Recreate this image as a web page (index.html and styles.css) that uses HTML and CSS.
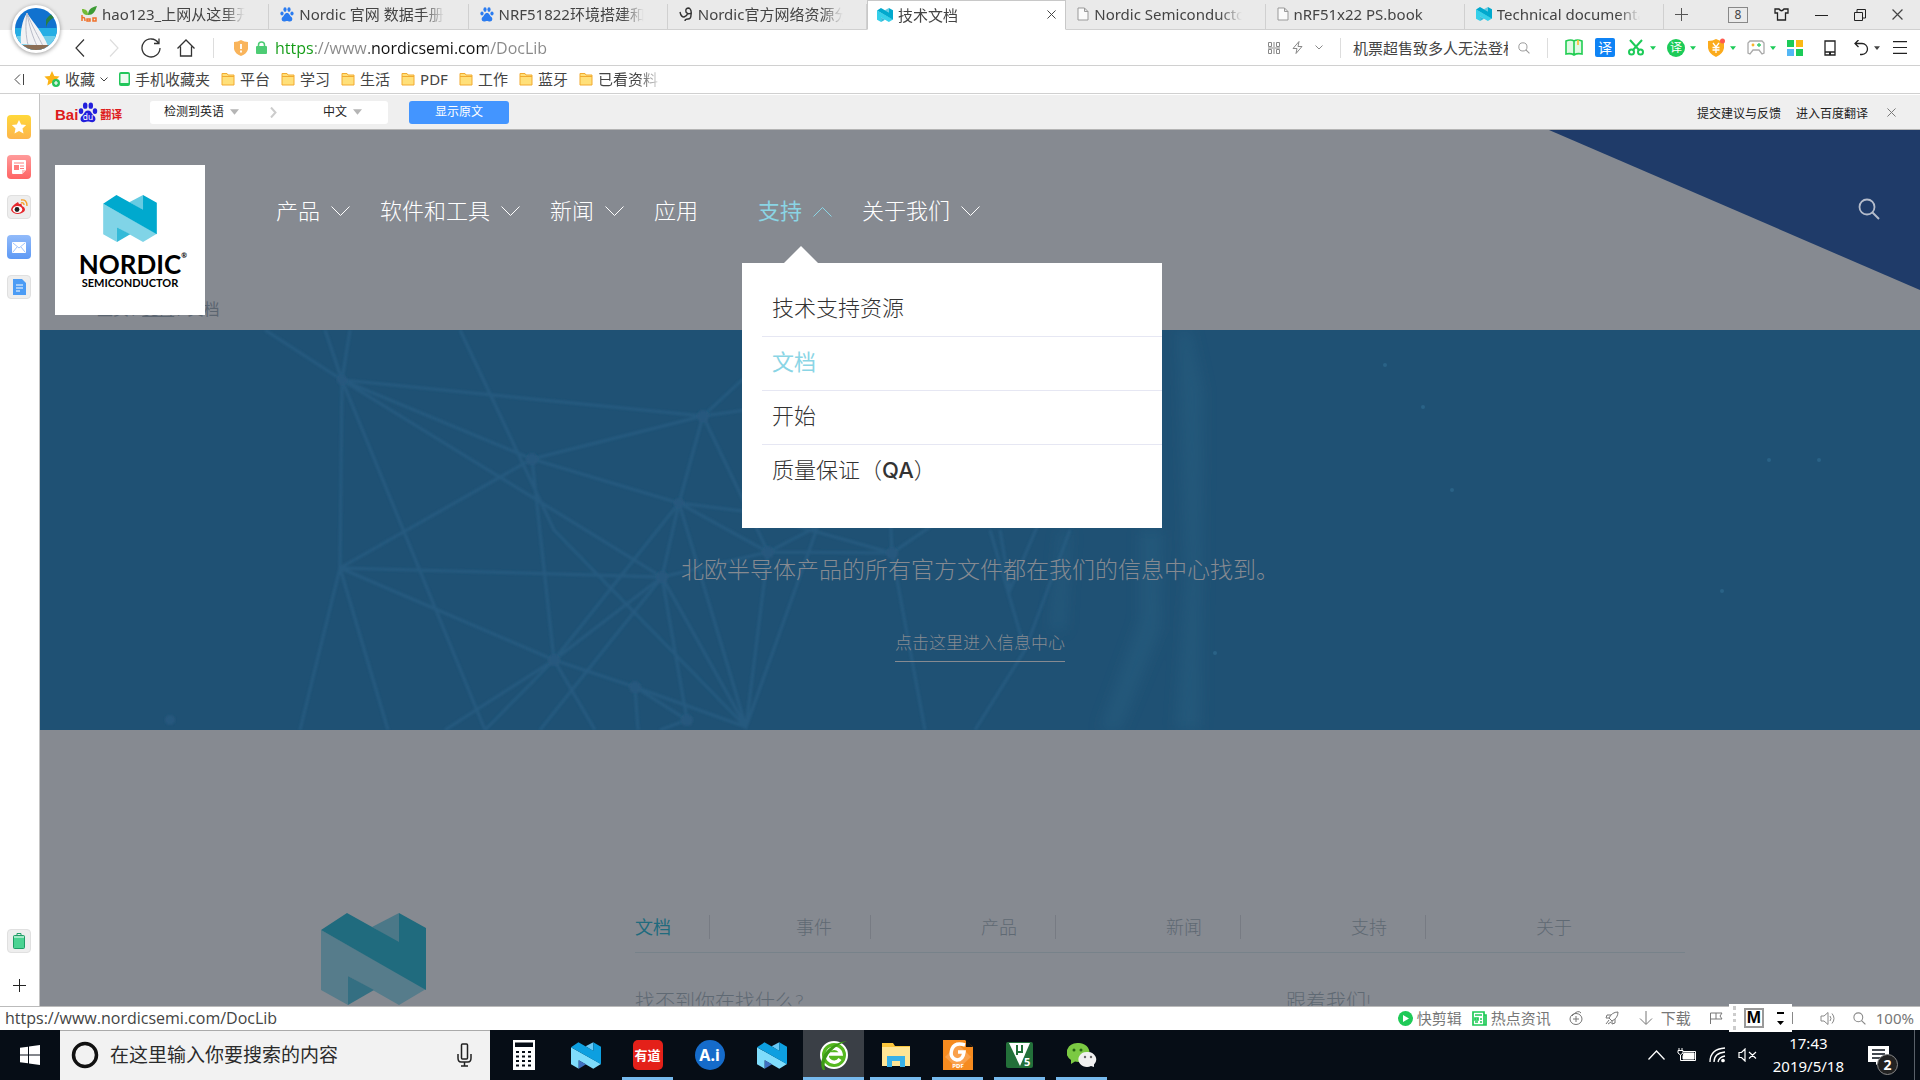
FILE: index.html
```
<!DOCTYPE html>
<html lang="zh-CN">
<head>
  <meta charset="UTF-8">
  <meta name="viewport" content="width=device-width, initial-scale=1.0">
  <title>技术文档</title>
  <link rel="stylesheet" href="styles.css">
</head>
<body>

<svg class="defs" width="0" height="0" aria-hidden="true">
  <symbol id="nordic" viewBox="0 0 105 92">
    <path class="n-light" d="M0 17 105 76 78 92 27 63V92L0 77Z"/>
    <path class="n-fold" d="M27 63 53 77 27 92Z"/>
    <path class="n-mid" d="M51 14 78 0V30Z"/>
    <path class="n-dark" d="M0 17 26 0 78 29V0L105 15V77Z"/>
  </symbol>
  <symbol id="paw" viewBox="0 0 14 15">
    <ellipse cx="2" cy="6.5" rx="1.6" ry="2.1"/><ellipse cx="5" cy="2.6" rx="1.6" ry="2.3"/><ellipse cx="9" cy="2.6" rx="1.6" ry="2.3"/><ellipse cx="12" cy="6.5" rx="1.6" ry="2.1"/>
    <path d="M7 6C4.500 6 4.500 8.500 2.600 10 1 11.500 1.500 14.500 4 14.500 5.500 14.500 6 14 7 14s1.500.5 3 .5c2.500 0 3-3 1.400-4.500C9.500 8.500 9.500 6 7 6Z"/>
  </symbol>
  <symbol id="page" viewBox="0 0 12 14"><path d="M1 1H7.500L11 4.500V13H1ZM7.500 1V4.500H11" fill="#fafafa" stroke="#999"/></symbol>
  <symbol id="folder" viewBox="0 0 14 14"><path d="M1 1.500H6L7 3H13V13H1Z" fill="#ffe07a" stroke="#f2ab31"/><path d="M1 4.500H13" stroke="#f2ab31"/></symbol>
  <symbol id="down" viewBox="0 0 19 11"><path d="M.5.5 9.500 9.500 18.500.5" fill="none" stroke="currentColor"/></symbol>
  <symbol id="small-down" viewBox="0 0 8 5"><path d="M.5.5 4 4 7.500.5" fill="none" stroke="currentColor"/></symbol>
  <symbol id="tri" viewBox="0 0 8 5"><path d="M0 0H8L4 5Z" fill="currentColor"/></symbol>
  <symbol id="mag" viewBox="0 0 22 22"><circle cx="9" cy="9" r="7.500" fill="none" stroke="currentColor" stroke-width="1.800"/><path d="M14.500 14.500 21 21" stroke="currentColor" stroke-width="2"/></symbol>
  <symbol id="cross" viewBox="0 0 10 10"><path d="M.5.5 9.500 9.500M9.500.5.5 9.500" stroke="currentColor" stroke-width="1.100"/></symbol>
</svg>

<header class="browser">
  <a class="avatar" href="#" aria-label="用户">
    <svg viewBox="0 0 42 42" width="42" height="42">
      <defs><clipPath id="round"><circle cx="21" cy="21" r="21"/></clipPath></defs>
      <g clip-path="url(#round)">
        <rect width="42" height="42" fill="#1172cf"/>
        <path d="M0 20H42V30H0Z" fill="#24aee4"/><path d="M0 28H42V42H0Z" fill="#6fcde9"/>
        <path d="M31 20C32 14 36 10 42 9L42 5C37 5 33 8 31 12Z" fill="#2a7f43"/>
        <path d="M6 36C5 24 7 12 12 5 18 14 28 25 33 38Z" fill="#f2f2f4"/>
        <path d="M12 5C14 18 18 29 22 38M12 5C10 18 11 28 13 37M12 5C17 18 24 30 28 38" stroke="#b9bcc8" fill="none"/>
        <path d="M5 37H34L30 42H9Z" fill="#8b6e55"/>
      </g>
    </svg>
  </a>

  <div class="tab-bar">
    <nav class="tabs">
      <a class="tab" href="#"><svg width="16" height="16" viewBox="0 0 16 16"><path d="M1 3C5 3 7 5 7 9 3 9 1 7 1 3Z" fill="#75bb35"/><path d="M16 0C10 1 7 4 7 9 12 9 14 6 16 0Z" fill="#3d9c35"/><path d="M1 9V15M1 12Q4 10 4 15M6 13H9V15H6ZM12 12H15V15H12Z" fill="none" stroke="#f0712b" stroke-width="1.500"/></svg><span>hao123_上网从这里开始</span></a>
      <a class="tab" href="#"><svg class="paw" width="14" height="15"><use href="#paw"/></svg><span>Nordic 官网 数据手册</span></a>
      <a class="tab" href="#"><svg class="paw" width="14" height="15"><use href="#paw"/></svg><span>NRF51822环境搭建和</span></a>
      <a class="tab" href="#"><svg width="14" height="14" viewBox="0 0 14 14" fill="none" stroke="#333" stroke-width="1.400"><path d="M1 5Q2 10 5 10 8 9 9 6M12 6Q9 8 7 5 6 1 10 1 13 3 12 8 12 12 9 12 6 12 6 14"/></svg><span>Nordic官方网络资源分</span></a>
      <a class="tab active" href="#"><svg class="brand tiny" width="16" height="14"><use href="#nordic"/></svg><span>技术文档</span><button class="icon" aria-label="关闭标签"><svg width="9" height="9"><use href="#cross"/></svg></button></a>
      <a class="tab" href="#"><svg width="12" height="14"><use href="#page"/></svg><span>Nordic Semiconductor</span></a>
      <a class="tab" href="#"><svg width="12" height="14"><use href="#page"/></svg><span>nRF51x22 PS.book</span></a>
      <a class="tab" href="#"><svg class="brand tiny" width="16" height="14"><use href="#nordic"/></svg><span>Technical documentation</span></a>
    </nav>
    <div class="window-buttons">
      <button class="icon" aria-label="新标签"><svg width="13" height="13" viewBox="0 0 13 13"><path d="M6.500 0V13M0 6.500H13" stroke="#555"/></svg></button>
      <button class="icon count">8</button>
      <button class="icon" aria-label="皮肤"><svg width="15" height="13" viewBox="0 0 15 13" fill="none" stroke="#222" stroke-width="1.300"><path d="M5 1 1 1V5H3.500V12H11.500V5H14V1H10Q7.500 4.500 5 1Z"/></svg></button>
      <button class="icon" aria-label="最小化"><svg width="13" height="13" viewBox="0 0 13 13"><path d="M0 7.500H13" stroke="#222"/></svg></button>
      <button class="icon" aria-label="还原"><svg width="12" height="12" viewBox="0 0 12 12" fill="none" stroke="#222"><path d="M.5 3.500H8.500V11.500H.5ZM3 3V.5H11.500V9H9"/></svg></button>
      <button class="icon" aria-label="关闭"><svg width="11" height="11"><use href="#cross"/></svg></button>
    </div>
  </div>

  <div class="address-bar">
    <div class="nav-buttons">
      <button class="icon" aria-label="后退"><svg width="10" height="18" viewBox="0 0 10 18" fill="none" stroke="#333" stroke-width="1.200"><path d="M9 .5 1 9 9 17.500"/></svg></button>
      <button class="icon" aria-label="前进"><svg width="10" height="18" viewBox="0 0 10 18" fill="none" stroke="#ddd" stroke-width="1.200"><path d="M1 .5 9 9 1 17.500"/></svg></button>
      <button class="icon" aria-label="刷新"><svg width="20" height="20" viewBox="0 0 20 20" fill="none" stroke="#333" stroke-width="1.300"><path d="M17.500 5A9 9 0 1 0 19 10M18 .5V5.500H13"/></svg></button>
      <button class="icon" aria-label="主页"><svg width="18" height="18" viewBox="0 0 18 18" fill="none" stroke="#333" stroke-width="1.300"><path d="M.5 9.500 9 1 17.500 9.500M3.500 7.500V17H14.500V7.500"/></svg></button>
    </div>
    <form class="url">
      <svg width="14" height="16" viewBox="0 0 14 16"><path d="M0 2Q4 2 7 0 10 2 14 2V9Q13 14 7 16 1 14 0 9Z" fill="#f9b45b"/><path d="M7 4V9M7 10.500V12.500" stroke="#fff" stroke-width="1.800"/></svg>
      <svg width="11" height="13" viewBox="0 0 11 13"><path d="M2.500 6V4A3 3 0 0 1 8.500 4V6" fill="none" stroke="#4dcc74" stroke-width="1.500"/><rect y="5" width="11" height="8" rx="1" fill="#4dcc74"/></svg>
      <input type="text" aria-label="地址" value="https://www.nordicsemi.com/DocLib">
    </form>
    <div class="url-tools">
      <svg width="12" height="12" viewBox="0 0 12 12" fill="none" stroke="#888"><path d="M.5.5H3.500V4.500H.5ZM8.500.5H11.500V4.500H8.500ZM.5 7.500H3.500V11.500H.5ZM8.500 7.500H11.500V11.500H8.500ZM6 0V5M6 7V12M0 6H12"/></svg>
      <svg width="11" height="13" viewBox="0 0 11 13" fill="none" stroke="#888"><path d="M7 .5 1 7.500H5L4 12.500 10 5.500H6Z"/></svg>
      <svg width="8" height="5" color="#888"><use href="#small-down"/></svg>
    </div>
    <form class="search-box">
      <input type="text" aria-label="搜索" value="机票超售致多人无法登机">
      <button class="icon" type="button" aria-label="搜索"><svg width="12" height="12" color="#999"><use href="#mag"/></svg></button>
    </form>
    <div class="extensions">
      <button class="icon" aria-label="阅读"><svg width="18" height="17" viewBox="0 0 18 17" fill="#e0f9e4" stroke="#21cd52" stroke-width="1.600"><path d="M1 2Q6 0 9 2 12 0 17 2V15Q12 14 9 16 6 14 1 15ZM9 2V16"/><path d="M13 1V6" stroke="#fdbd2c"/></svg></button>
      <button class="icon square">译</button>
      <button class="icon" aria-label="截图"><svg width="18" height="17" viewBox="0 0 18 17" fill="none" stroke="#1ccb58" stroke-width="2"><path d="M3 1 12 11M15 1 6 11"/><circle cx="4.500" cy="13" r="2.500"/><circle cx="13.500" cy="13" r="2.500"/></svg><svg class="green" width="6" height="4"><use href="#tri"/></svg></button>
      <button class="icon"><span class="disc">译</span><svg class="green" width="6" height="4"><use href="#tri"/></svg></button>
      <button class="icon" aria-label="网银"><svg width="18" height="19" viewBox="0 0 18 19"><path d="M1 3Q6 3 9 1 12 3 17 3V10Q16 16 9 19 2 16 1 10Z" fill="#fbab1c"/><path d="M6 5 9 9 12 5M5.500 9.500H12.500M5.500 12H12.500M9 9V15" fill="none" stroke="#fff" stroke-width="1.300"/><circle cx="15.500" cy="3" r="2.500" fill="#ff5a4f"/></svg><svg class="green" width="6" height="4"><use href="#tri"/></svg></button>
      <button class="icon" aria-label="游戏"><svg width="18" height="15" viewBox="0 0 18 15" fill="none" stroke="#aaa" stroke-width="1.300"><path d="M3 1H15L17 3V13L15 14 12 10H6L3 14 1 13V3Z"/><circle cx="6" cy="5" r=".8" stroke="#f9b32b"/><path d="M12 3V7M10 5H14" stroke="#37cc6b"/></svg><svg class="green" width="6" height="4"><use href="#tri"/></svg></button>
      <button class="icon" aria-label="应用"><svg width="16" height="16" viewBox="0 0 16 16"><path d="M0 0H7V7H0Z" fill="#1ccb58"/><path d="M9 0H16V7H9Z" fill="#fbb814"/><path d="M0 9H7V16H0Z" fill="#54b7f5"/><path d="M9 9H16V16H9Z" fill="#1ccb58"/></svg></button>
      <button class="icon wide" aria-label="手机"><svg width="12" height="16" viewBox="0 0 12 16" fill="none" stroke="#222" stroke-width="1.300"><path d="M1 1H11V15H1ZM1 12H11M5 13.500H7"/></svg></button>
      <button class="icon" aria-label="撤销"><svg width="15" height="16" viewBox="0 0 15 16" fill="none" stroke="#222" stroke-width="1.300"><path d="M4.500 0 1 3.500 4.500 7M1 3.500H8A5.500 5.500 0 0 1 8 14.500H6"/></svg><svg width="6" height="4"><use href="#tri"/></svg></button>
      <button class="icon more" aria-label="菜单"><svg width="14" height="13" viewBox="0 0 14 13" stroke="#222" stroke-width="1.200"><path d="M0 .6H14M0 6.500H14M0 12.400H14"/></svg></button>
    </div>
  </div>

  <nav class="bookmarks">
    <button class="icon fold" aria-label="折叠"><svg width="10" height="11" viewBox="0 0 10 11" fill="none" stroke="#444"><path d="M6 .5 1 5.500 6 10.500M9.500 0V11"/></svg></button>
    <a class="fav" href="#"><svg width="16" height="16" viewBox="0 0 16 16"><path d="M8 0 10.300 5 15.500 5.600 11.600 9.200 12.600 14.500 8 11.800 3.300 14.500 4.300 9.200.4 5.600 5.700 5Z" fill="#fbb316"/><circle cx="12" cy="12" r="4" fill="#28c45c"/><path d="M12 10V14M10 12H14" stroke="#fff" stroke-width="1.200"/></svg>收藏 <svg width="8" height="5"><use href="#small-down"/></svg></a>
    <a href="#"><svg width="11" height="14" viewBox="0 0 11 14"><rect width="11" height="14" rx="2" fill="#22c65b"/><path d="M1.500 2H9.500V11H1.500Z" fill="#ecfbf0"/></svg>手机收藏夹</a>
    <a href="#"><svg width="14" height="14"><use href="#folder"/></svg>平台</a>
    <a href="#"><svg width="14" height="14"><use href="#folder"/></svg>学习</a>
    <a href="#"><svg width="14" height="14"><use href="#folder"/></svg>生活</a>
    <a href="#"><svg width="14" height="14"><use href="#folder"/></svg>PDF</a>
    <a href="#"><svg width="14" height="14"><use href="#folder"/></svg>工作</a>
    <a href="#"><svg width="14" height="14"><use href="#folder"/></svg>蓝牙</a>
    <a class="faded" href="#"><svg width="14" height="14"><use href="#folder"/></svg>已看资料</a>
  </nav>
</header>

<div class="workspace">
  <aside class="sidebar">
    <button class="icon tile yellow" aria-label="收藏"><svg width="16" height="16" viewBox="0 0 16 16"><path d="M8 1 10.200 5.500 15.200 6.100 11.500 9.600 12.500 14.500 8 12 3.500 14.500 4.500 9.600.8 6.100 5.800 5.500Z" fill="#fff"/></svg></button>
    <button class="icon tile red" aria-label="新闻"><svg width="14" height="14" viewBox="0 0 14 14"><path d="M0 1Q0 0 1 0H13Q14 0 14 1V10L10 14H1Q0 14 0 13Z" fill="#fff"/><path d="M2 3H12M8 6H12M8 8.500H12" stroke="#ff7d7d"/><path d="M2 5H7V10H2Z" fill="#ff7d7d"/><path d="M10 14V10H14" fill="#ffc4c4"/></svg></button>
    <button class="icon tile plain" aria-label="微博"><svg width="18" height="16" viewBox="0 0 18 16"><path d="M8 3Q1 7 1 11 3 15 8 15 14 14 15 11 15 8 12 7 12 4 9 5Z" fill="#e6282d"/><ellipse cx="7.500" cy="10.500" rx="4.800" ry="3.500" fill="#fff"/><circle cx="7" cy="10.500" r="2.400" fill="#222"/><path d="M11 1Q17 0 17 7M11 4Q14 3 14 6" fill="none" stroke="#f6a02e" stroke-width="1.400"/></svg></button>
    <button class="icon tile blue" aria-label="邮箱"><svg width="14" height="11" viewBox="0 0 14 11"><rect width="14" height="11" rx="1" fill="#fff"/><path d="M1 1 7 6 13 1M1 10 5 5M13 10 9 5" fill="none" stroke="#9fc3fb"/></svg></button>
    <button class="icon tile plain" aria-label="文档"><svg width="13" height="16" viewBox="0 0 13 16"><path d="M0 0H9L13 4V16H0Z" fill="#4c9cf5"/><path d="M3 6H10M3 9H10M3 12H7" stroke="#fff"/></svg></button>
    <span class="spacer"></span>
    <button class="icon tile plain" aria-label="清理"><svg width="12" height="16" viewBox="0 0 12 16"><rect x=".5" y="2.500" width="11" height="13" rx="1" fill="#4bd392" stroke="#1f9d66"/><path d="M4 2V.5H8V2" fill="none" stroke="#1f9d66"/><path d="M1 4H11" stroke="#fff"/></svg></button>
    <button class="icon add" aria-label="添加"><svg width="13" height="13" viewBox="0 0 13 13"><path d="M6.500 0V13M0 6.500H13" stroke="#222"/></svg></button>
  </aside>

  <main class="content">
    <div class="translate-bar">
      <a class="baidu" href="#"><b>Bai</b><svg width="20" height="21" viewBox="0 0 14 15"><use href="#paw"/><text x="7" y="13" font-size="6" text-anchor="middle">du</text></svg><span>翻译</span></a>
      <div class="languages">
        <label><select aria-label="源语言"><option>检测到英语</option></select><svg width="9" height="6"><use href="#tri"/></svg></label>
        <svg class="to" width="7" height="11" viewBox="0 0 7 11"><path d="M1 .5 5.500 5.500 1 10.500" fill="none" stroke="#ccc" stroke-width="2"/></svg>
        <label><select aria-label="目标语言"><option>中文</option></select><svg width="9" height="6"><use href="#tri"/></svg></label>
      </div>
      <button class="original">显示原文</button>
      <div class="translate-links">
        <a href="#">提交建议与反馈</a>
        <a href="#">进入百度翻译</a>
        <button class="icon" aria-label="关闭翻译"><svg width="9" height="9"><use href="#cross"/></svg></button>
      </div>
    </div>

    <div class="site">
      <header class="site-header">
        <div class="corner"></div>
        <div class="crumbs"><span>主页</span>/<a href="#">支持</a>/<span>文档</span></div>
        <a class="logo" href="#">
          <svg class="brand" width="54" height="47"><use href="#nordic"/></svg>
          <span class="logo-name">NORDIC<sup>®</sup></span>
          <span class="logo-sub">SEMICONDUCTOR</span>
        </a>
        <nav class="menu">
          <a href="#">产品<svg width="19" height="11"><use href="#down"/></svg></a>
          <a href="#">软件和工具<svg width="19" height="11"><use href="#down"/></svg></a>
          <a href="#">新闻<svg width="19" height="11"><use href="#down"/></svg></a>
          <a href="#">应用<svg width="19" height="11"></svg></a>
          <div class="menu-item">
            <a class="current" href="#">支持<svg width="19" height="11" viewBox="0 0 19 11"><path d="M.5 10.500 9.500 1.500 18.500 10.500" fill="none" stroke="currentColor"/></svg></a>
            <div class="submenu">
              <a href="#">技术支持资源</a>
              <a class="current" href="#">文档</a>
              <a href="#">开始</a>
              <a href="#">质量保证（<b>QA</b>）</a>
            </div>
          </div>
          <a href="#">关于我们<svg width="19" height="11"><use href="#down"/></svg></a>
        </nav>
        <button class="icon site-search" aria-label="搜索"><svg width="22" height="22"><use href="#mag"/></svg></button>
      </header>

      <section class="hero">
        <svg class="network" viewBox="0 0 1880 400" preserveAspectRatio="xMinYMin slice" aria-hidden="true">
          <defs>
            <filter id="soft"><feGaussianBlur stdDeviation="1"/></filter>
            <filter id="haze" x="-100%" width="300%"><feGaussianBlur stdDeviation="7"/></filter>
          </defs>
          <g fill="none" stroke="#2a6187" stroke-width="3" opacity=".6" filter="url(#soft)">
            <path d="M225 0 302 50 285 0M310 0 302 50 663 86 492 129 302 50 300 238 492 129M302 50 622 247 300 238 514 330 622 247 639 173 492 129 514 330"/>
            <path d="M663 86 702 50 800 0M663 86 639 173 702 181 852 223 728 222 639 173 514 330M663 86 728 222 622 247M663 86 850 60M728 222 790 190M852 223 850 180M852 223 900 190"/>
            <path d="M420 0 514 200 706 397M302 50 445 400M300 238 260 400M300 238 348 400M514 330 405 400M514 330 445 400M514 330 555 400M514 330 595 357 706 397M622 247 647 390M622 247 706 397 780 190M622 247 500 400M639 173 706 397M595 357 598 400M595 357 647 390 620 400M728 222 706 397M852 223 885 400M950 200 985 320 935 400M960 200 970 260 1000 190M1030 200 985 320"/>
          </g>
          <g fill="#27597e" filter="url(#soft)"><circle cx="302" cy="50" r="5"/><circle cx="663" cy="86" r="6"/><circle cx="492" cy="129" r="6"/><circle cx="639" cy="173" r="5"/><circle cx="622" cy="247" r="6"/><circle cx="514" cy="330" r="6"/><circle cx="728" cy="222" r="6"/><circle cx="852" cy="223" r="6"/><circle cx="595" cy="357" r="6"/><circle cx="647" cy="390" r="6"/><circle cx="130" cy="390" r="5"/></g>
          <g fill="#2b6283" filter="url(#haze)" opacity=".45"><path d="M1138 0H1150L1163 60 1160 400H1136L1146 250Z"/><path d="M1100 200H1122L1120 300 1080 400H1060L1100 290Z"/><path d="M1020 200H1030L1025 300H1010Z"/></g>
          <g fill="#2a6286"><circle cx="1345" cy="35" r="2"/><circle cx="1383" cy="77" r="2"/><circle cx="1412" cy="160" r="2"/><circle cx="1729" cy="130" r="2"/><circle cx="1779" cy="130" r="2"/><circle cx="1682" cy="261" r="2"/><circle cx="1175" cy="323" r="2"/></g>
        </svg>
        <p>北欧半导体产品的所有官方文件都在我们的信息中心找到。</p>
        <a href="#">点击这里进入信息中心</a>
      </section>

      <footer class="site-footer">
        <svg class="brand dim" width="105" height="92"><use href="#nordic"/></svg>
        <div class="footer-body">
          <nav class="footer-tabs">
            <a class="current" href="#">文档</a>
            <a href="#">事件</a>
            <a href="#">产品</a>
            <a href="#">新闻</a>
            <a href="#">支持</a>
            <a href="#">关于</a>
          </nav>
          <div class="footer-titles"><span>找不到你在找什么?</span><span>跟着我们!</span></div>
        </div>
      </footer>
    </div>
  </main>
</div>

<div class="status-bar">
  <span class="status-url">https://www.nordicsemi.com/DocLib</span>
  <div class="status-tools">
    <a href="#"><svg width="15" height="15" viewBox="0 0 15 15"><circle cx="7.500" cy="7.500" r="7.500" fill="#1fca57"/><path d="M5 4 11 7.500 5 11Z" fill="#fff"/></svg>快剪辑</a>
    <a href="#"><svg width="15" height="15" viewBox="0 0 15 15" fill="none" stroke="#1fca57" stroke-width="1.700"><path d="M1 1H12V14H1ZM12 4H14V14H10M3 4H10M3 11H6M8 8H10M8 11H10"/><path d="M3 7H6V9H3Z"/></svg>热点资讯</a>
    <svg width="14" height="14" viewBox="0 0 14 14" fill="none" stroke="#777"><ellipse cx="7" cy="8" rx="6" ry="5.500"/><path d="M3 5Q9-2 12 2M7 5V11M4 8H10"/></svg>
    <svg class="rocket" width="14" height="14" viewBox="0 0 14 14" fill="none" stroke="#777"><path d="M13 1Q7 1 4 7L7 10Q13 7 13 1ZM6 4 2 4 1 7 4 7M10 8V12L7 13V10M4 9 1 13M6 11 3 13"/></svg>
    <a href="#"><svg width="14" height="14" viewBox="0 0 14 14" fill="none" stroke="#777"><path d="M7 0V13M1 7.500 7 13.500 13 7.500"/></svg><span class="dl">下载</span></a>
    <svg width="14" height="12" viewBox="0 0 14 12" fill="none" stroke="#777"><path d="M1.500 12V1H13L11 4 13 7H1.500M7 1V7"/></svg>
    <div class="ime-space"><div class="ime"><i></i><b>M</b><svg width="7" height="13" viewBox="0 0 7 13"><path d="M0 0H7V2H0ZM0 9H7L3.500 13Z"/></svg></div><svg width="2" height="12" viewBox="0 0 2 12"><path d="M0 0H1V12H0Z" fill="#888"/></svg></div>
    <svg width="15" height="13" viewBox="0 0 15 13" fill="none" stroke="#888"><path d="M1 4H4L8 .5V12.500L4 9H1ZM10 4Q12 6.500 10 9M12 1.500Q16 6.500 12 11.500"/></svg>
    <svg width="13" height="13" color="#888"><use href="#mag"/></svg>
    <span>100%</span>
  </div>
</div>

<footer class="taskbar">
  <button class="icon start" aria-label="开始"><svg width="20" height="20" viewBox="0 0 20 20" fill="#fff"><path d="M0 2.800 8 1.700V9.500H0ZM9 1.500 20 0V9.500H9ZM0 10.500H8V18.300L0 17.200ZM9 10.500H20V20L9 18.500Z"/></svg></button>
  <label class="cortana">
    <svg width="28" height="28" viewBox="0 0 28 28"><circle cx="14" cy="14" r="11.500" fill="none" stroke="#111" stroke-width="3.500"/></svg>
    <input type="text" placeholder="在这里输入你要搜索的内容">
    <svg width="15" height="24" viewBox="0 0 15 24" fill="none" stroke="#222" stroke-width="1.500"><rect x="4.500" y="1" width="6" height="15" rx="1"/><path d="M1 11V15Q1 19 4 19H11Q14 19 14 15V11M7.500 19V23M4 23H11"/></svg>
  </label>
  <nav class="apps">
    <button class="icon app" aria-label="计算器"><svg width="22" height="30" viewBox="0 0 22 30"><path d="M0 0H22V30H0Z" fill="#fff"/><path d="M2 2.500H20V7H2ZM3 11H6V13H3ZM9 11H12V13H9ZM15 11H18V13H15ZM3 15.500H6V17.500H3ZM9 15.500H12V17.500H9ZM15 15.500H18V17.500H15ZM3 20H6V22H3ZM9 20H12V22H9ZM15 20H18V22H15ZM3 24.500H6V26.500H3ZM9 24.500H12V26.500H9ZM15 24.500H18V26.500H15Z" fill="#060d16"/></svg></button>
    <button class="icon app" aria-label="Nordic"><svg class="brand vivid" width="30" height="27"><use href="#nordic"/></svg></button>
    <button class="icon app open"><span class="youdao">有道</span></button>
    <button class="icon app"><span class="ai">A.i</span></button>
    <button class="icon app" aria-label="Nordic"><svg class="brand vivid" width="30" height="27"><use href="#nordic"/></svg></button>
    <button class="icon app open focused" aria-label="浏览器"><svg width="30" height="32" viewBox="0 0 30 32"><circle cx="15" cy="16" r="13" fill="#55b81f" stroke="#fff" stroke-width="2"/><path d="M21 20A7 7 0 1 1 22 15H9" fill="none" stroke="#fff" stroke-width="3.500"/><path d="M4 31C-2 22 8 4 28 2 14 7 3 19 6 31Z" fill="#3c9b16"/></svg></button>
    <button class="icon app open" aria-label="资源管理器"><svg width="28" height="24" viewBox="0 0 28 24"><path d="M0 0H11L13 3H28V23H0Z" fill="#fbc63c"/><path d="M0 4H28V23H0Z" fill="#ffe595"/><path d="M5 24V13H23V24H18V18H10V24Z" fill="#38b1e8"/></svg></button>
    <button class="icon app open" aria-label="PDF"><svg width="30" height="30" viewBox="0 0 30 30"><path d="M0 0H22L30 7V30H0Z" fill="#f68b1f"/><path d="M2 17 15 4 28 17 15 29Z" fill="#f9a04b"/><path d="M22 5Q12 2 9 9 6 18 14 20 20 20 21 12H15" fill="none" stroke="#fff" stroke-width="3.500"/><path d="M23 0V7H30Z" fill="#111"/><text x="15" y="28" font-size="6" font-weight="bold" fill="#fff" text-anchor="middle">PDF</text></svg></button>
    <button class="icon app open" aria-label="Keil"><svg width="27" height="26" viewBox="0 0 27 26"><rect width="27" height="26" rx="2" fill="#23703a"/><path d="M3 1H24L14 24Z" fill="#fff"/><path d="M11 3V10H16V3M11 8V13" fill="none" stroke="#23703a" stroke-width="2"/><text x="18" y="24" font-size="11" font-weight="bold" fill="#fff">5</text></svg></button>
    <button class="icon app open" aria-label="微信"><svg width="30" height="25" viewBox="0 0 30 25"><path d="M11 0A11 9.500 0 1 1 8 18.500L4 21V17A11 9.500 0 0 1 11 0Z" fill="#7bc943"/><path d="M21 9A8.500 7.500 0 0 1 27 21.500V24L24 23A8.500 7.500 0 1 1 21 9Z" fill="#f0f0f0"/><g fill="#276514"><circle cx="7" cy="7" r="1.500"/><circle cx="14" cy="7" r="1.500"/></g><g fill="#666"><circle cx="18" cy="14" r="1.200"/><circle cx="24" cy="14" r="1.200"/></g></svg></button>
  </nav>
  <div class="tray">
    <svg width="17" height="10" viewBox="0 0 17 10" fill="none" stroke="#fff" stroke-width="1.300"><path d="M.5 9.500 8.500 1 16.500 9.500"/></svg>
    <svg width="20" height="14" viewBox="0 0 20 14" fill="none" stroke="#fff"><path d="M6 3.500H18.500V12.500H3.500V7M1 2.500H6V5L3.500 7 1 5ZM2 0V2M5 0V2"/><path d="M7 5H17V11H6V8Z" fill="#fff"/></svg>
    <svg width="17" height="16" viewBox="0 0 17 16" fill="none" stroke="#fff" stroke-width="1.300"><path d="M1 15Q1 2 16 1M5 15Q5 6 16 5M9 15Q10 10 16 9"/><circle cx="14" cy="13.500" r="1.200" fill="#fff"/></svg>
    <svg width="19" height="14" viewBox="0 0 19 14" fill="none" stroke="#fff" stroke-width="1.200"><path d="M1 4.500H3.500L7 1V13L3.500 9.500H1ZM11 4 18 10.500M18 4 11 10.500"/></svg>
    <time>17:43<br>2019/5/18</time>
    <button class="icon notice" aria-label="通知"><svg width="21" height="19" viewBox="0 0 21 19"><path d="M0 0H21V16H12L8 19V16H0Z" fill="#fff"/><path d="M4 4H17M4 8H17M4 12H13" stroke="#060d16" stroke-width="1.300"/></svg><span class="badge">2</span></button>
  </div>
</footer>

</body>
</html>
```
FILE: styles.css
```
* {
  box-sizing: border-box;
}

body {
  margin: 0;
  height: 100vh;
  display: flex;
  flex-direction: column;
  overflow: hidden;
  background: #fff;
  color: #444;
  font-family: "Noto Sans", "Noto Sans CJK SC", sans-serif;
  font-size: 15px;
  line-height: 20px;
}

a {
  color: inherit;
  text-decoration: none;
}

svg {
  flex: none;
  display: block;
}

input,
select,
button {
  font: inherit;
  color: inherit;
}

input {
  border: 0;
  padding: 0;
  min-width: 0;
  background: none;
  outline: none;
}

.defs {
  position: absolute;
}

.icon {
  display: flex;
  align-items: center;
  justify-content: center;
  flex: none;
  padding: 0;
  border: 0;
  background: none;
  cursor: pointer;
}

/* Nordic mark */
.brand {
  --dark: #00a9ce;
  --mid: #66cbe2;
  --fold: #33bad8;
  --light: #80d4e7;
}

.brand.tiny {
  --light: #35d0ea;
}

.brand.vivid {
  --dark: #0d9fe0;
  --mid: #67c8f5;
  --fold: #3f6fc0;
  --light: #7fdcfb;
}

.brand.dim {
  --dark: #206b7e;
  --mid: #4b7888;
  --fold: #346f82;
  --light: #567c8b;
}

.n-dark { fill: var(--dark); }
.n-mid { fill: var(--mid); }
.n-fold { fill: var(--fold); }
.n-light { fill: var(--light); }

/* Browser chrome */
.browser {
  position: relative;
  flex: none;
}

.avatar {
  position: absolute;
  left: 12px;
  top: 5px;
  z-index: 2;
  padding: 3px;
  border-radius: 50%;
  background: #fff;
  box-shadow: 0 1px 4px rgba(0, 0, 0, 0.4);
}

.tab-bar {
  display: flex;
  height: 30px;
  padding-left: 70px;
  background: #eaeaea;
}

.tabs {
  display: flex;
  flex: 1;
  min-width: 0;
}

.tab {
  display: flex;
  align-items: center;
  flex: 1;
  min-width: 0;
  gap: 5px;
  padding: 0 9px 1px 11px;
  border-bottom: 1px solid #d0d0d0;
  background: linear-gradient(#d0d0d0, #d0d0d0) right 4px / 1px 100% no-repeat;
}

.tab span {
  flex: 1;
  min-width: 0;
  margin-right: 15px;
  overflow: hidden;
  white-space: nowrap;
  -webkit-mask-image: linear-gradient(to right, #000 85%, transparent);
  mask-image: linear-gradient(to right, #000 85%, transparent);
}

.tab.active {
  padding-left: 9px;
  background: #fff;
  border: 1px solid #c8c8c8;
  border-bottom-color: #fff;
}

.paw {
  fill: #2b7cf0;
}

.window-buttons {
  display: flex;
  align-items: center;
  gap: 26px;
  width: 256px;
  padding-left: 11px;
  border-bottom: 1px solid #d0d0d0;
}

.count {
  width: 20px;
  height: 16px;
  margin-left: 14px;
  border: 1px solid #888;
  font-size: 12px;
}

.address-bar {
  display: flex;
  align-items: center;
  height: 36px;
  padding-right: 13px;
  border-bottom: 1px solid #d0d0d0;
}

.nav-buttons {
  display: flex;
  align-items: center;
  gap: 24px;
  height: 20px;
  width: 214px;
  padding-left: 75px;
  border-right: 1px solid #ddd;
}

.nav-buttons .icon:nth-child(n+3) {
  margin-left: -2px;
}

.nav-buttons .icon:last-child {
  margin-left: -8px;
}

.url {
  display: flex;
  align-items: center;
  flex: 1;
  gap: 8px;
  padding-left: 20px;
}

/* scheme green, host black, the rest grey */
.url input {
  flex: 1;
  height: 24px;
  font-family: "Open Sans", sans-serif;
  font-size: 16px;
  color: transparent;
  background: linear-gradient(to right, #119b14 0 38px, #888 38px 94px, #111 94px 212px, #888 212px);
  -webkit-background-clip: text;
  background-clip: text;
}

.url-tools {
  display: flex;
  align-items: center;
  gap: 12px;
  height: 20px;
  padding-right: 17px;
  border-right: 1px solid #ddd;
}

.search-box {
  display: flex;
  align-items: center;
  gap: 10px;
  height: 20px;
  padding: 0 17px 0 12px;
  border-right: 1px solid #ddd;
}

.search-box input {
  width: 155px;
}

.extensions {
  display: flex;
  align-items: center;
  gap: 11px;
  padding-left: 17px;
}

.extensions .icon {
  gap: 5px;
}

.extensions .square {
  width: 20px;
  height: 19px;
  margin: 0 1px;
  border-radius: 2px;
  background: #0f83f5;
  color: #fff;
  font-size: 14px;
}

.extensions .wide {
  width: 26px;
  margin-left: 3px;
}

.extensions .more {
  margin-left: 2px;
}

.disc {
  width: 18px;
  height: 18px;
  border-radius: 50%;
  background: #1ccb58;
  color: #fff;
  font-size: 12px;
  line-height: 18px;
}

.green {
  color: #1ccb58;
}

.bookmarks {
  display: flex;
  align-items: center;
  gap: 11px;
  height: 28px;
  padding: 0 0 1px 14px;
  border-bottom: 1px solid #d0d0d0;
}

.bookmarks a {
  display: flex;
  align-items: center;
  gap: 5px;
}

.fold {
  margin-right: 9px;
}

.faded {
  -webkit-mask-image: linear-gradient(to right, #000 75%, rgba(0, 0, 0, 0.2));
  mask-image: linear-gradient(to right, #000 75%, rgba(0, 0, 0, 0.2));
}

.workspace {
  display: flex;
  flex: 1;
  min-height: 0;
}

.sidebar {
  display: flex;
  flex-direction: column;
  align-items: center;
  flex: none;
  gap: 16px;
  width: 40px;
  padding: 21px 1px 9px 0;
  border-right: 1px solid #c4c4c4;
}

.spacer {
  flex: 1;
}

.tile {
  width: 24px;
  height: 24px;
  border-radius: 4px;
}

.yellow { background: linear-gradient(#ffd83a, #fdb54c); }
.red { background: linear-gradient(#ff9b9b, #ff6464); }
.blue { background: linear-gradient(#92bbfa, #5d99f5); }
.plain { background: #eee; border: 1px solid #e0e0e0; }

.add {
  width: 24px;
  height: 24px;
  margin-top: 4px;
}

.content {
  display: flex;
  flex-direction: column;
  flex: 1;
  min-width: 0;
}

/* Translate toolbar */
.translate-bar {
  display: flex;
  align-items: center;
  flex: none;
  height: 36px;
  padding: 0 24px 0 15px;
  border-top: 1px solid #fff;
  border-bottom: 1px solid #b4b4b4;
  background: #efefef;
  color: #222;
  font-size: 12px;
}

.baidu {
  display: flex;
  align-items: flex-end;
  width: 95px;
  color: #de1c1c;
}

.baidu b {
  font-family: "Liberation Sans", sans-serif;
  font-size: 15px;
  line-height: 17px;
}

.baidu svg {
  fill: #231fdc;
}

.baidu text {
  fill: #fff;
}

.baidu span {
  font-size: 11px;
  line-height: 16px;
  font-weight: bold;
  margin-left: 2px;
}

.languages {
  display: flex;
  align-items: center;
  height: 23px;
  padding: 0 26px 0 14px;
  border-radius: 3px;
  background: #fff;
}

.languages label {
  display: flex;
  align-items: center;
  gap: 5px;
  color: #b5b5b5;
}

.languages select {
  appearance: none;
  padding: 0;
  border: 0;
  background: none;
  color: #222;
}

.to {
  margin: 0 46px 0 31px;
}

.original {
  width: 100px;
  height: 23px;
  margin-left: 21px;
  padding: 0;
  border: 0;
  border-radius: 3px;
  background: #4395ff;
  color: #fff;
  line-height: 20px;
}

.translate-links {
  display: flex;
  align-items: center;
  gap: 15px;
  margin-left: auto;
}

.translate-links a {
  padding-top: 4px;
}

.translate-links .icon {
  margin-left: 4px;
  color: #777;
}

/* Site */
.site {
  flex: 1;
  min-height: 0;
  overflow: hidden;
  background: #868a91;
  font-family: Lato, "Noto Sans CJK SC", sans-serif;
  font-weight: 300;
}

.site-header {
  position: relative;
  display: flex;
  align-items: flex-start;
  height: 200px;
  padding: 35px 40px 0 15px;
}

.corner {
  position: absolute;
  top: 0;
  right: 0;
  width: 371px;
  height: 160px;
  background: #1f3b69;
  clip-path: polygon(0 0, 100% 0, 100% 100%);
}

.crumbs {
  position: absolute;
  left: 57px;
  top: 167px;
  display: flex;
  gap: 3px;
  color: #5b6570;
  font-size: 16px;
  line-height: 24px;
  font-weight: 400;
}

.crumbs a {
  text-decoration: underline;
}

.logo {
  position: relative;
  display: flex;
  flex-direction: column;
  align-items: center;
  width: 150px;
  height: 150px;
  padding-top: 30px;
  background: #fff;
  color: #000;
}

.logo-name {
  position: relative;
  margin-top: 9px;
  font-size: 26px;
  line-height: 26px;
  font-weight: 700;
}

.logo-name sup {
  position: absolute;
  left: 100%;
  top: 0;
  font-size: 7px;
  line-height: 8px;
}

.logo-sub {
  font-size: 11px;
  line-height: 12px;
  font-weight: 700;
}

.menu {
  display: flex;
  gap: 30px;
  margin-left: 71px;
  padding-top: 30px;
  color: #fff;
  font-size: 22px;
  line-height: 32px;
}

.menu > a,
.menu-item > a {
  display: flex;
  align-items: center;
  gap: 11px;
}

.menu-item {
  position: relative;
}

.menu .current {
  color: #8ad5e5;
  font-weight: 400;
}

.submenu {
  position: absolute;
  left: -16px;
  top: 68px;
  z-index: 3;
  width: 420px;
  padding: 20px 0 29px 20px;
  background: #fff;
  color: #333;
}

.submenu::before {
  content: "";
  position: absolute;
  left: 42px;
  top: -17px;
  border: 17px solid transparent;
  border-top: 0;
  border-bottom-color: #fff;
}

.submenu a {
  display: block;
  height: 54px;
  padding: 9px 10px 0;
  border-bottom: 1px solid #e6e7f3;
}

.submenu a:last-child {
  border-bottom-color: transparent;
}

.submenu b {
  font-family: Inter, sans-serif;
  font-weight: 500;
  font-size: 22px;
}

.site-search {
  position: relative;
  margin: 33px 0 0 auto;
  color: #b5bccb;
}

.hero {
  position: relative;
  display: flex;
  flex-direction: column;
  align-items: center;
  height: 400px;
  padding-top: 222px;
  background: #1f5174;
  color: #868a91;
}

.network {
  position: absolute;
  inset: 0;
  width: 100%;
  height: 100%;
}

.hero p,
.hero > a {
  position: relative;
  margin: 0;
}

.hero p {
  font-size: 23px;
  line-height: 34px;
}

.hero > a {
  margin-top: 44px;
  padding-bottom: 6px;
  border-bottom: 1px solid #868a91;
  font-size: 17px;
  line-height: 25px;
}

.site-footer {
  display: flex;
  gap: 209px;
  padding: 183px 235px 0 281px;
  color: #5f6973;
}

.footer-body {
  flex: 1;
}

.footer-tabs {
  display: flex;
  align-items: center;
  height: 40px;
  padding-bottom: 12px;
  border-bottom: 1px solid #77828a;
  font-size: 18px;
  line-height: 24px;
}

.footer-tabs a {
  padding: 0 38px 0 110px;
  border-right: 1px solid #777b83;
}

.footer-tabs a:first-child {
  padding-left: 0;
}

.footer-tabs a:nth-child(2) {
  padding-left: 86px;
}

.footer-tabs a:last-child {
  border-right: 0;
}

.footer-tabs .current {
  color: #206b7e;
  font-weight: 400;
}

.footer-titles {
  display: grid;
  grid-template-columns: 651px 1fr;
  padding-top: 34px;
  font-size: 20px;
  line-height: 28px;
}

/* Status bar */
.status-bar {
  display: flex;
  align-items: center;
  justify-content: space-between;
  flex: none;
  height: 24px;
  padding: 0 6px 1px 5px;
  border-top: 1px solid #bbb;
}

.status-url {
  font-family: "Open Sans", sans-serif;
  font-size: 16px;
}

.status-tools {
  display: flex;
  align-items: center;
  color: #777;
}

.status-tools a {
  display: flex;
  align-items: center;
  gap: 4px;
  margin-right: 10px;
}

.status-tools > svg {
  margin: 0 10px 0 8px;
}

.status-tools .rocket {
  margin: 0 20px 0 12px;
}

.dl {
  margin-left: 4px;
}

.ime-space {
  display: flex;
  align-items: center;
  width: 79px;
}

.ime {
  position: relative;
  z-index: 2;
  display: flex;
  align-items: center;
  width: 63px;
  height: 28px;
  padding: 0 7px 0 4px;
  gap: 8px;
  margin-left: -4px;
  background: #fff;
  color: #000;
}

.ime i {
  height: 24px;
  border-left: 3px dotted #ccc;
}

.ime b {
  width: 20px;
  height: 20px;
  margin-right: 5px;
  border: 2px solid #999;
  font-family: "Liberation Sans", sans-serif;
  font-size: 17px;
  line-height: 16px;
  text-align: center;
}

/* Taskbar */
.taskbar {
  display: flex;
  flex: none;
  height: 50px;
  background: #060d16;
  color: #fff;
}

.start {
  width: 60px;
}

.cortana {
  display: flex;
  align-items: center;
  width: 430px;
  padding: 0 18px 2px 11px;
  gap: 11px;
  border-top: 1px solid #aaa;
  background: #f2f2f2;
}

.cortana input {
  flex: 1;
  font-size: 19px;
}

.cortana input::placeholder {
  color: #2b2b2b;
}

.apps {
  display: flex;
  gap: 1px;
  padding-left: 3px;
}

.app {
  width: 61px;
}

.app.open {
  background: linear-gradient(#76b9ed, #76b9ed) center bottom / 51px 3px no-repeat;
}

.app.focused {
  background: linear-gradient(#76b9ed, #76b9ed) center bottom / 100% 3px no-repeat #3a3f46;
}

.youdao {
  width: 30px;
  border-radius: 5px;
  background: #e42019;
  font-size: 13px;
  line-height: 30px;
  font-weight: bold;
}

.ai {
  width: 30px;
  border-radius: 50%;
  background: #156bca;
  font-size: 16px;
  line-height: 30px;
  font-weight: bold;
}

.app span {
  color: #fff;
}

.tray {
  display: flex;
  align-items: center;
  gap: 12px;
  margin-left: auto;
  padding-right: 5px;
}

.tray time {
  margin: 0 12px 0 4px;
  text-align: center;
  line-height: 23px;
}

.notice {
  position: relative;
  height: 50px;
  padding-right: 25px;
  border-right: 1px solid #596069;
}

.badge {
  position: absolute;
  left: 9px;
  top: 24px;
  width: 21px;
  height: 21px;
  border: 1px solid #888;
  border-radius: 50%;
  background: #222;
  color: #fff;
  font-size: 14px;
  line-height: 19px;
  font-weight: bold;
}
```
